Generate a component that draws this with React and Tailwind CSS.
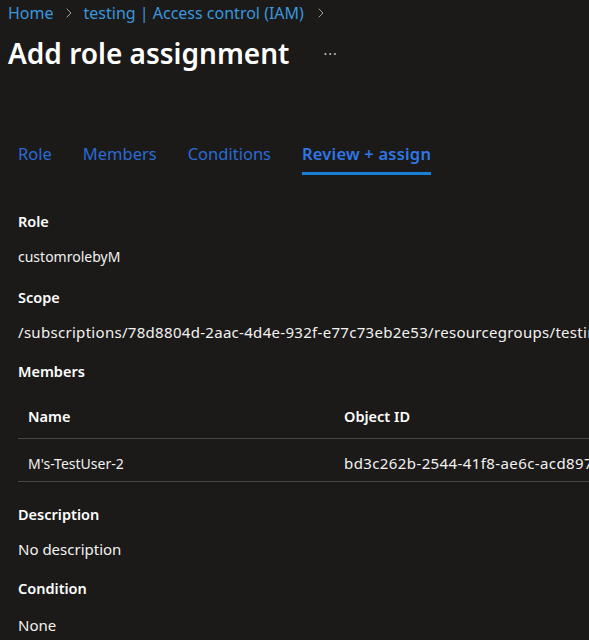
import { ChevronRight } from 'lucide-react';

const font = { fontFamily: '"Noto Sans", sans-serif' };

function Field({ label, value, className = '', valueClass = 'mt-[15px] text-[14px]' }) {
	return (
		<div className={className}>
			<div className="text-[14.5px] leading-5 font-semibold text-white">{label}</div>
			<div className={`${valueClass} leading-5 text-[#f3f2f1] whitespace-nowrap`}>{value}</div>
		</div>
	);
}

export default function App() {
	const tabs = ['Role', 'Members', 'Conditions', 'Review + assign'];

	return (
		<div className="w-[589px] h-[640px] overflow-hidden bg-[#1b1a19]" style={font}>
			{/* Breadcrumb */}
			<div className="flex items-center h-[26px] pl-2 text-[16px] text-[#3a96dd]">
				<span>Home</span>
				<ChevronRight className="w-4 h-4 mx-[7px] text-[#a19f9d]" strokeWidth={1.5} />
				<span>testing | Access control (IAM)</span>
				<ChevronRight className="w-4 h-4 ml-[9px] text-[#a19f9d]" strokeWidth={1.5} />
			</div>

			{/* Title */}
			<div className="flex items-center h-[54px] pl-2">
				<h1 className="text-[28px] font-semibold text-white leading-none">Add role assignment</h1>
				<span className="ml-[34px] text-[14px] text-[#c8c6c4] tracking-[1px]">···</span>
			</div>

			{/* Tabs */}
			<div className="flex gap-[31px] pl-[18px] mt-[60px]">
				{tabs.map((tab, i) => (
					<div
						key={tab}
						className={`text-[16.5px] leading-5 pt-[4px] pb-[8px] ${
							i === 3
								? 'font-semibold text-[#2f76e6] tracking-[0.2px] border-b-[3px] border-[#1a7fd6]'
								: 'text-[#2a6ad6] border-b-[3px] border-transparent'
						}`}
					>
						{tab}
					</div>
				))}
			</div>

			<div className="pl-[18px] mt-[36px]">
				<Field label="Role" value="customrolebyM" valueClass="mt-[16px] text-[14px]" />
				<Field
					className="mt-[20px]"
					label="Scope"
					valueClass="mt-[15px] text-[15px] tracking-[0.3px]"
					value="/subscriptions/78d8804d-2aac-4d4e-932f-e77c73eb2e53/resourcegroups/testing"
				/>

				<div className="mt-[19px] text-[14.5px] leading-5 font-semibold text-white">Members</div>
				<div className="mt-[12px] w-[700px] text-[14px]">
					<div className="flex items-center h-[46px] pt-[2px] border-b border-[#484644] text-[14.5px] font-semibold text-white">
						<div className="w-[326px] pl-[10px]">Name</div>
						<div>Object ID</div>
					</div>
					<div className="flex items-center h-[43px] pt-[6px] border-b border-[#484644] text-[#f3f2f1]">
						<div className="w-[326px] pl-[10px]">M's-TestUser-2</div>
						<div className="whitespace-nowrap text-[15px] tracking-[0.4px]">bd3c262b-2544-41f8-ae6c-acd8975f21a3</div>
					</div>
				</div>

				<Field className="mt-[22px]" valueClass="mt-[15px] text-[15px]" label="Description" value="No description" />
				<Field className="mt-[19px]" valueClass="mt-[17px] text-[15px]" label="Condition" value="None" />
			</div>
		</div>
	);
}
